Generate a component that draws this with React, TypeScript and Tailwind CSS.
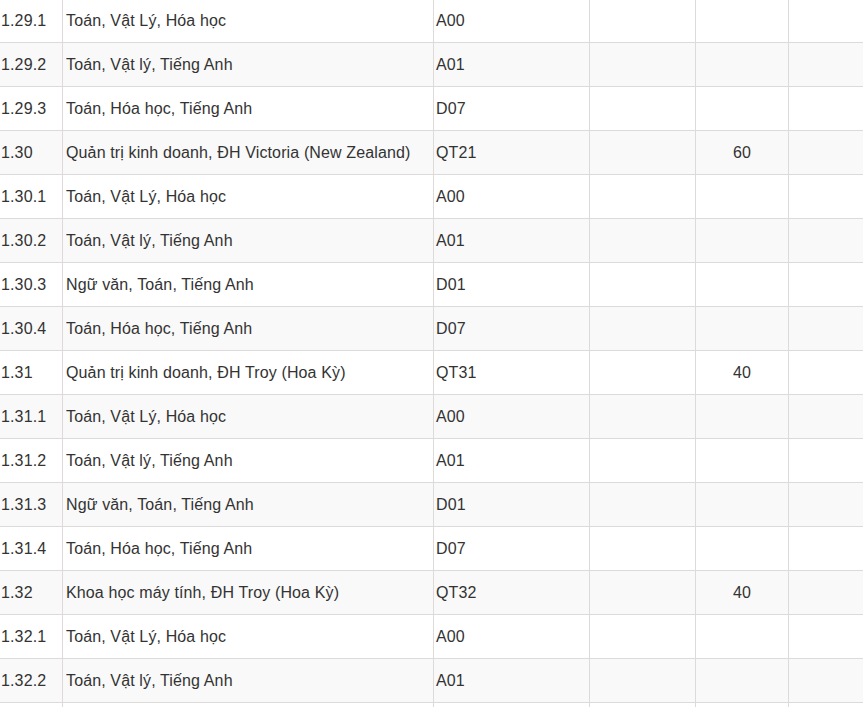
import React from "react";

type Row = [string, string, string, string, string];

const rows: Row[] = [
  ["1.29.1", "Toán, Vật Lý, Hóa học", "A00", "", ""],
  ["1.29.2", "Toán, Vật lý, Tiếng Anh", "A01", "", ""],
  ["1.29.3", "Toán, Hóa học, Tiếng Anh", "D07", "", ""],
  ["1.30", "Quản trị kinh doanh, ĐH Victoria (New Zealand)", "QT21", "", "60"],
  ["1.30.1", "Toán, Vật Lý, Hóa học", "A00", "", ""],
  ["1.30.2", "Toán, Vật lý, Tiếng Anh", "A01", "", ""],
  ["1.30.3", "Ngữ văn, Toán, Tiếng Anh", "D01", "", ""],
  ["1.30.4", "Toán, Hóa học, Tiếng Anh", "D07", "", ""],
  ["1.31", "Quản trị kinh doanh, ĐH Troy (Hoa Kỳ)", "QT31", "", "40"],
  ["1.31.1", "Toán, Vật Lý, Hóa học", "A00", "", ""],
  ["1.31.2", "Toán, Vật lý, Tiếng Anh", "A01", "", ""],
  ["1.31.3", "Ngữ văn, Toán, Tiếng Anh", "D01", "", ""],
  ["1.31.4", "Toán, Hóa học, Tiếng Anh", "D07", "", ""],
  ["1.32", "Khoa học máy tính, ĐH Troy (Hoa Kỳ)", "QT32", "", "40"],
  ["1.32.1", "Toán, Vật Lý, Hóa học", "A00", "", ""],
  ["1.32.2", "Toán, Vật lý, Tiếng Anh", "A01", "", ""],
  ["", "", "", "", ""],
];

export default function App() {
  return (
    <div
      className="w-[863px] h-[707px] overflow-hidden bg-white text-[16px] text-[#333] tracking-[0.13px]"
      style={{ fontFamily: '"Liberation Sans", Arial, sans-serif' }}
    >
      <div className="-mt-[1px] -ml-[1px] w-[900px]">
        {rows.map((r, i) => (
          <div
            key={i}
            className={`grid grid-cols-[64px_371px_156px_106px_93px_1fr] h-[44px] border-b border-[#dedada] ${
              i % 2 === 1 ? "bg-[#f9f9f9]" : "bg-white"
            }`}
          >
            <div className="flex items-center pl-[2px] border-r border-[#dedada] whitespace-nowrap">{r[0]}</div>
            <div className="flex items-center pl-[3px] border-r border-[#dedada] whitespace-nowrap">{r[1]}</div>
            <div className="flex items-center pl-[2px] border-r border-[#dedada] whitespace-nowrap">{r[2]}</div>
            <div className="flex items-center justify-center border-r border-[#dedada]">{r[3]}</div>
            <div className="flex items-center justify-center border-r border-[#dedada]">{r[4]}</div>
            <div className="flex items-center"></div>
          </div>
        ))}
      </div>
    </div>
  );
}
